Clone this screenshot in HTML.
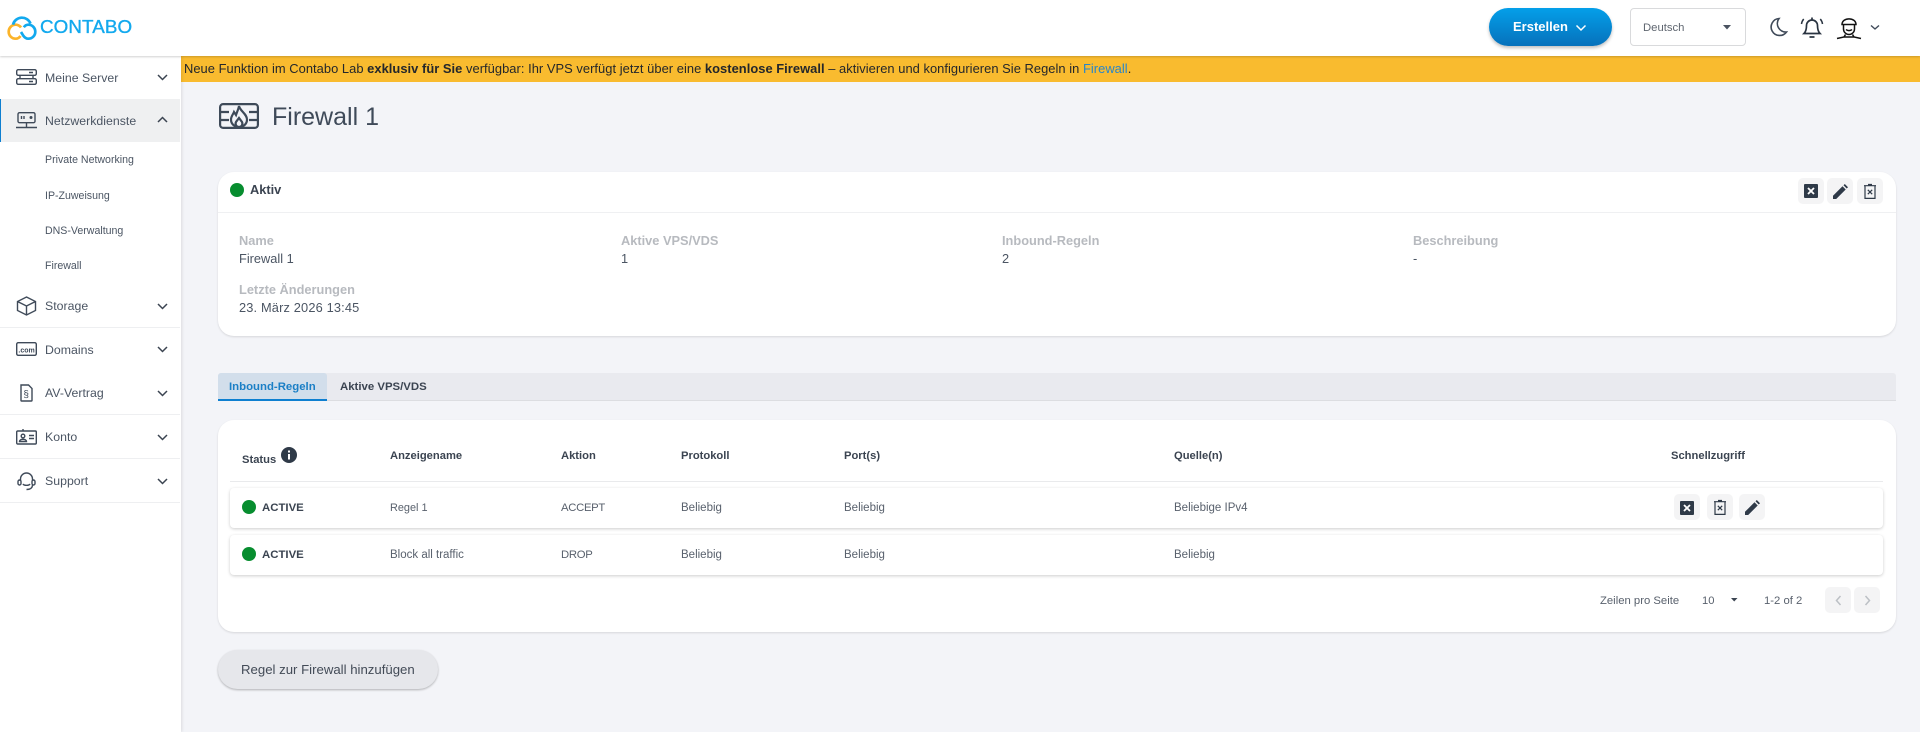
<!DOCTYPE html>
<html lang="de">
<head>
<meta charset="utf-8">
<title>Firewall 1</title>
<style>
*{box-sizing:border-box}
html,body{margin:0;padding:0;width:1920px;height:732px;overflow:hidden;background:#f3f4f8}
body{position:relative;font-family:"Liberation Sans",sans-serif;color:#3b4451;filter:blur(.3px)}
.a,.t,svg{position:absolute}
.t{white-space:nowrap;line-height:20px;height:20px}
svg{overflow:visible;fill:none}
header{position:absolute;left:0;top:0;width:1920px;height:56px;background:#fff;box-shadow:0 1px 2px rgba(0,0,0,.18);z-index:3}
aside{position:absolute;left:0;top:56px;width:181px;height:676px;background:#fff;box-shadow:1px 0 3px rgba(0,0,0,.1);z-index:2}
.main-t{font-size:12.3px;color:#4b5563;left:45px;letter-spacing:.02px}
.sub-t{font-size:10.6px;color:#4b5563;left:45px}
.sep{position:absolute;left:0;width:180px;height:1px;background:#eeeff1}
.card{position:absolute;left:218px;width:1678px;background:#fff;border-radius:16px;box-shadow:0 1px 2px rgba(0,0,0,.12)}
.lbl{font-size:12.8px;font-weight:bold;color:#b7babf}
.val{font-size:12.8px;color:#4b5563}
.dot{position:absolute;width:14px;height:14px;border-radius:50%;background:#078d2f}
.th{font-size:11.2px;font-weight:bold;color:#3b4451}
.td{font-size:11.5px;color:#59616d}
.cap{font-size:11.3px;letter-spacing:-.3px}
.row{position:absolute;left:230px;width:1653px;height:40px;background:#fff;border-radius:4px;box-shadow:0 1px 3px rgba(0,0,0,.2)}
.ib{position:absolute;width:26px;height:26px;border-radius:5px;background:#f4f4f5}
</style>
</head>
<body>
<div class="a" style="left:181px;top:56px;width:1739px;height:26px;background:#f9bb2f"></div>
<div class="t" style="left:184px;top:59px;font-size:12.9px;color:#24272b;letter-spacing:.04px">Neue Funktion im Contabo Lab <b>exklusiv für Sie</b> verfügbar: Ihr VPS verfügt jetzt über eine <b>kostenlose Firewall</b> – aktivieren und konfigurieren Sie Regeln in <span style="color:#2a86c8">Firewall</span>.</div>

<header>
<svg style="left:0;top:0" width="50" height="56" stroke-width="2.700"><path d="M21 27.500C19.500 25.500 18 24.700 15.700 24.700a7 7 0 0 0 0 14C18 38.700 19.500 37.500 20.500 36" stroke="#fbb42a"/><path d="M13 24.700a9.200 9.200 0 0 1 17.500-1.200M28.300 24.700a7 7 0 1 1 0 14C26 38.700 24.200 37 23 35.200L21 32M28.300 24.700C26.300 24.700 24.800 25.800 23.800 27.300" stroke="#12a9ee"/></svg>
<div class="t" style="left:40px;top:17px;font-size:18.8px;color:#12a9ee;letter-spacing:.1px;line-height:20px;-webkit-text-stroke:.35px #12a9ee">CONTABO</div>
<div class="a" style="left:1489px;top:8px;width:123px;height:38px;border-radius:19px;background:linear-gradient(#049fe9,#0671bb);box-shadow:0 2px 3px rgba(0,0,0,.25)"></div>
<div class="t" style="left:1513px;top:17px;color:#fff;font-size:13px;font-weight:bold">Erstellen</div>
<svg style="left:1575px;top:24px" width="12" height="8"><path d="M1.500 1.500 6 6l4.500-4.500" stroke="#fff" stroke-width="1.500"/></svg>
<div class="a" style="left:1630px;top:8px;width:116px;height:38px;border:1px solid #d9dadc;border-radius:4px;background:#fff"></div>
<div class="t" style="left:1643px;top:18px;font-size:11.3px;color:#5f6670">Deutsch</div>
<svg style="left:1723px;top:25px" width="9" height="5"><path d="M0 0h8L4 4.500z" fill="#4a5260"/></svg>
<svg style="left:1768px;top:17px" width="20" height="20"><path d="M11 1.500a8.500 8.500 0 1 0 7.500 13.500 8.500 8.500 0 0 1-7.500-13.500z" stroke="#3f4a59" stroke-width="1.600"/></svg>
<svg style="left:1800px;top:15px" width="24" height="24" stroke="#2a3441" stroke-width="1.700"><path d="M4 18.500c2-2 2.500-4 2.500-8a5.500 5.500 0 0 1 11 0c0 4 .5 6 2.500 8zM9.500 22h5M12 2.500v2.500"/><path d="M1.500 9c.2-2 1-3.500 2.200-5M22.500 9c-.2-2-1-3.500-2.200-5" stroke-width="1.500"/></svg>
<svg style="left:1837px;top:17px" width="24" height="22" stroke="#111" stroke-width="1.500"><path d="M5 7.500C5 0 19 0 19 7.500zM6.500 8v4a5.500 5.500 0 0 0 11 0V8M9 12.500c1.500 1.500 4.500 1.500 6 0M0 21.500l7-1.500 1.500-2.500M24 21.500 17 20l-1.500-2.500M7 20h10"/></svg>
<svg style="left:1870px;top:24px" width="10" height="7"><path d="M1 1.500 5 5l4-3.500" stroke="#3f4a59" stroke-width="1.400"/></svg>
</header>

<aside>
<div class="a" style="left:0;top:43px;width:180px;height:43px;background:#eff0f1;border-left:1px solid #0e7fd0"></div>
<div class="sep" style="top:271px"></div><div class="sep" style="top:358px"></div><div class="sep" style="top:402px"></div><div class="sep" style="top:446px"></div>
<div class="t main-t" style="top:12px">Meine Server</div>
<div class="t main-t" style="top:55px">Netzwerkdienste</div>
<div class="t sub-t" style="top:94px">Private Networking</div>
<div class="t sub-t" style="top:130px">IP-Zuweisung</div>
<div class="t sub-t" style="top:165px">DNS-Verwaltung</div>
<div class="t sub-t" style="top:200px">Firewall</div>
<div class="t main-t" style="top:240px">Storage</div>
<div class="t main-t" style="top:284px">Domains</div>
<div class="t main-t" style="top:327px">AV-Vertrag</div>
<div class="t main-t" style="top:371px">Konto</div>
<div class="t main-t" style="top:415px">Support</div>
<svg style="left:157px;top:0" width="20" height="440" stroke="#3b4451" stroke-width="1.500"><path d="M1 19l4.500 4.500L10 19M1 66l4.500-4.500L10 66M1 248l4.500 4.500L10 248M1 291l4.500 4.500L10 291M1 335l4.500 4.500L10 335M1 379l4.500 4.500L10 379M1 423l4.500 4.500L10 423"/></svg>
<svg style="left:16px;top:13px" width="21" height="16" stroke="#3f4a59" stroke-width="1.400"><rect x=".7" y=".7" width="19.600" height="5.600" rx="1.500"/><rect x=".7" y="9.700" width="19.600" height="5.600" rx="1.500"/><path d="M4 6.300c0 2 0 3.400 0 3.400M17 6.300v3.400M13 3.500h4M13 12.500h4"/></svg>
<svg style="left:16px;top:56px" width="21" height="18" stroke="#3f4a59" stroke-width="1.400"><rect x="2" y=".7" width="17" height="10" rx="1.500"/><path d="M5.500 4v3M8 4v3M10.500 11v4M0 15.500h21"/><circle cx="15" cy="5.500" r=".8" fill="#3f4a59"/></svg>
<svg style="left:16px;top:240px" width="21" height="20" stroke="#3f4a59" stroke-width="1.400"><path d="M10.500 1 19.500 5.500v9L10.500 19 1.500 14.500v-9zM1.500 5.500l9 4.500 9-4.500M10.500 10v9"/></svg>
<svg style="left:16px;top:286px" width="21" height="14"><rect x=".7" y=".7" width="19.600" height="12.600" rx="1.500" stroke="#3f4a59" stroke-width="1.400"/><text x="2.400" y="10.300" font-family="Liberation Sans" font-weight="bold" font-size="7" fill="#3f4a59">.com</text></svg>
<svg style="left:20px;top:328px" width="13" height="18" stroke="#3f4a59" stroke-width="1.400"><path d="M1 1h7.500L12 4.500V16.500a.5.500 0 0 1-.5.500H1.500a.5.500 0 0 1-.5-.5z"/><text x="3.400" y="13.500" font-family="Liberation Sans" font-size="10" fill="#3f4a59" stroke="none">§</text></svg>
<svg style="left:16px;top:373px" width="21" height="16" stroke="#3f4a59" stroke-width="1.400"><rect x=".7" y="2" width="19.600" height="13" rx="1"/><circle cx="7" cy="7" r="1.800"/><path d="M3.500 12.500c0-3 7-3 7 0zM13 6.500h5M13 9.500h5M7 0v2"/></svg>
<svg style="left:17px;top:415px" width="19" height="20" stroke="#3f4a59" stroke-width="1.400"><path d="M3.500 10V8a6 6 0 0 1 12 0v2"/><rect x="1" y="9" width="3" height="5" rx="1.500"/><rect x="15" y="9" width="3" height="5" rx="1.500"/><path d="M15.500 14c0 3-2.500 4.500-6 4.500M6 13c1 1.800 6 1.800 7 0"/></svg>
</aside>

<svg style="left:219px;top:103px" width="40" height="26" stroke="#3e4a59" stroke-width="2.200"><rect x="1.100" y="1.100" width="37.800" height="23.800" rx="3"/><path d="M1 9h9M1 17h9M30 9h9M30 17h9"/><path d="M20 3c1 5 8 8 8 13.500 0 4.500-3.500 7.500-8 7.500s-8-3-8-7.500c0-3 2-5 3-7.500l2 3c1-3 2.500-6 3-9zM20 24c-3 0-4-3-3-5l3-4 3 4c1 2 0 5-3 5z"/></svg>
<div class="t" style="left:272px;top:102px;height:30px;line-height:30px;font-size:25px;color:#3f4a59">Firewall 1</div>

<div class="card" style="top:172px;height:164px"></div>
<div class="a" style="left:218px;top:212px;width:1678px;height:1px;background:#eff0f2"></div>
<div class="dot" style="left:230px;top:183px"></div>
<div class="t" style="left:250px;top:180px;font-size:12.8px;font-weight:bold">Aktiv</div>
<div class="ib" style="left:1798px;top:178px"></div><div class="ib" style="left:1827px;top:178px"></div><div class="ib" style="left:1857px;top:178px"></div>
<svg style="left:1804px;top:184px" width="14" height="14"><rect width="14" height="14" rx="1" fill="#2f3a48"/><path d="M4 4l6 6M10 4l-6 6" stroke="#fff" stroke-width="1.800"/></svg>
<svg style="left:1833px;top:184px" width="15" height="15"><path d="M0 15v-3.200L9.500 2.300l3.200 3.200L3.200 15zM10.500 1.300 11.800 0 15 3.200l-1.300 1.300z" fill="#2f3a48"/></svg>
<svg style="left:1864px;top:184px" width="12" height="15" stroke="#2f3a48" stroke-width="1.200"><path d="M1 2.300v12.100h10V2.300M0 1.700h12M4 .5h4M3.800 5.800l4.400 4.400M8.200 5.800l-4.400 4.400"/></svg>
<div class="t lbl" style="left:239px;top:231px">Name</div>
<div class="t val" style="left:239px;top:249px">Firewall 1</div>
<div class="t lbl" style="left:621px;top:231px">Aktive VPS/VDS</div>
<div class="t val" style="left:621px;top:249px">1</div>
<div class="t lbl" style="left:1002px;top:231px">Inbound-Regeln</div>
<div class="t val" style="left:1002px;top:249px">2</div>
<div class="t lbl" style="left:1413px;top:231px">Beschreibung</div>
<div class="t val" style="left:1413px;top:249px">-</div>
<div class="t lbl" style="left:239px;top:280px">Letzte Änderungen</div>
<div class="t val" style="left:239px;top:298px;letter-spacing:.16px">23. März 2026 13:45</div>

<div class="a" style="left:218px;top:373px;width:1678px;height:28px;background:#e9eaef;border-bottom:1px solid #dcdde1;border-radius:3px 3px 0 0"></div>
<div class="a" style="left:218px;top:373px;width:109px;height:28px;background:#d2deeb;border-bottom:2px solid #0e7fd0;border-radius:3px 3px 0 0"></div>
<div class="t" style="left:229px;top:377px;font-size:11.400px;font-weight:bold;color:#1b7fc6">Inbound-Regeln</div>
<div class="t" style="left:340px;top:377px;font-size:11.400px;font-weight:bold;color:#3b4451">Aktive VPS/VDS</div>

<div class="card" style="top:420px;height:212px"></div>
<div class="a" style="left:230px;top:481px;width:1653px;height:1px;background:#e9eaec"></div>
<div class="t th" style="left:242px;top:450px">Status</div>
<svg style="left:281px;top:447px" width="16" height="16"><circle cx="8" cy="8" r="8" fill="#2f3a48"/><rect x="7" y="7" width="2" height="5.500" fill="#fff"/><rect x="7" y="3.500" width="2" height="2" fill="#fff"/></svg>
<div class="t th" style="left:390px;top:446px">Anzeigename</div>
<div class="t th" style="left:561px;top:446px">Aktion</div>
<div class="t th" style="left:681px;top:446px">Protokoll</div>
<div class="t th" style="left:844px;top:446px">Port(s)</div>
<div class="t th" style="left:1174px;top:446px">Quelle(n)</div>
<div class="t th" style="left:1671px;top:446px">Schnellzugriff</div>

<div class="row" style="top:488px"></div>
<div class="row" style="top:535px"></div>
<div class="dot" style="left:242px;top:500px"></div>
<div class="t th" style="left:262px;top:498px;font-size:11.400px">ACTIVE</div>
<div class="t td" style="left:390px;top:498px;font-size:10.9px">Regel 1</div>
<div class="t td cap" style="left:561px;top:498px">ACCEPT</div>
<div class="t td" style="left:681px;top:498px">Beliebig</div>
<div class="t td" style="left:844px;top:498px">Beliebig</div>
<div class="t td" style="left:1174px;top:498px">Beliebige IPv4</div>
<div class="ib" style="left:1674px;top:494px"></div><div class="ib" style="left:1707px;top:494px"></div><div class="ib" style="left:1739px;top:494px"></div>
<svg style="left:1680px;top:501px" width="14" height="14"><rect width="14" height="14" rx="1" fill="#2f3a48"/><path d="M4 4l6 6M10 4l-6 6" stroke="#fff" stroke-width="1.800"/></svg>
<svg style="left:1714px;top:500px" width="12" height="15" stroke="#2f3a48" stroke-width="1.200"><path d="M1 2.300v12.100h10V2.300M0 1.700h12M4 .5h4M3.800 5.800l4.400 4.400M8.200 5.800l-4.400 4.400"/></svg>
<svg style="left:1745px;top:500px" width="15" height="15"><path d="M0 15v-3.200L9.500 2.300l3.200 3.200L3.200 15zM10.500 1.300 11.800 0 15 3.200l-1.300 1.300z" fill="#2f3a48"/></svg>

<div class="dot" style="left:242px;top:547px"></div>
<div class="t th" style="left:262px;top:545px;font-size:11.400px">ACTIVE</div>
<div class="t td" style="left:390px;top:545px">Block all traffic</div>
<div class="t td cap" style="left:561px;top:545px">DROP</div>
<div class="t td" style="left:681px;top:545px">Beliebig</div>
<div class="t td" style="left:844px;top:545px">Beliebig</div>
<div class="t td" style="left:1174px;top:545px">Beliebig</div>

<div class="t td" style="left:1600px;top:591px;font-size:11.300px">Zeilen pro Seite</div>
<div class="t td" style="left:1702px;top:591px;font-size:11.200px">10</div>
<svg style="left:1731px;top:598px" width="7" height="4"><path d="M0 0h6.500L3.200 3.500z" fill="#3b4451"/></svg>
<div class="t td" style="left:1764px;top:591px;font-size:11.300px">1-2 of 2</div>
<div class="ib" style="left:1825px;top:587px"></div><div class="ib" style="left:1854px;top:587px"></div>
<svg style="left:1835px;top:595px" width="7" height="11"><path d="M5.500 1 1.500 5.500l4 4.500" stroke="#bcc0c5" stroke-width="1.500"/></svg>
<svg style="left:1864px;top:595px" width="7" height="11"><path d="M1.500 1l4 4.500-4 4.500" stroke="#bcc0c5" stroke-width="1.500"/></svg>

<div class="a" style="left:218px;top:650px;width:220px;height:39px;border-radius:20px;background:#e6e7eb;box-shadow:0 1px 2px rgba(0,0,0,.28)"></div>
<div class="t" style="left:241px;top:660px;font-size:13.200px;color:#434b57">Regel zur Firewall hinzufügen</div>
</body>
</html>
